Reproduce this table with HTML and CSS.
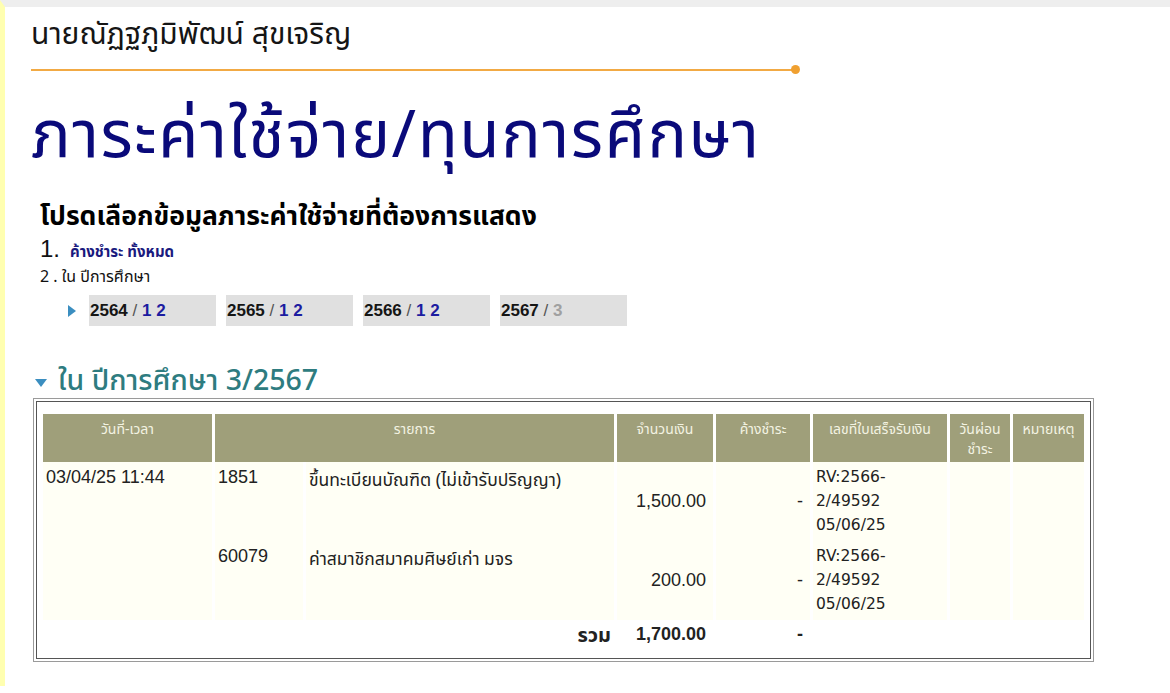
FILE: index.html
```html
<!DOCTYPE html>
<html lang="th">
<head>
<meta charset="utf-8">
<link rel="stylesheet" href="styles.css">
</head>
<body>
<div class="page">
  <div class="content">
    <div class="user-name">นายณัฏฐภูมิพัฒน์ สุขเจริญ</div>
    <div class="rule"><span class="rule-line"></span><span class="rule-dot"></span></div>
    <h1 class="title">ภาระค่าใช้จ่าย/ทุนการศึกษา</h1>
    <div class="chooser">
      <h2 class="chooser-head">โปรดเลือกข้อมูลภาระค่าใช้จ่ายที่ต้องการแสดง</h2>
      <div class="opt1"><span class="num">1.</span> <a class="opt-link">ค้างชำระ ทั้งหมด</a></div>
      <div class="opt2">2 . ใน ปีการศึกษา</div>
      <div class="years">
        <span class="arrow"></span>
        <div class="year-tab"><b>2564</b> <span class="sl">/</span> <span class="sem">1 2</span></div>
        <div class="year-tab"><b>2565</b> <span class="sl">/</span> <span class="sem">1 2</span></div>
        <div class="year-tab"><b>2566</b> <span class="sl">/</span> <span class="sem">1 2</span></div>
        <div class="year-tab"><b>2567</b> <span class="sl">/</span> <span class="sem dim">3</span></div>
      </div>
    </div>
    <h3 class="section-head"><span class="down"></span>ใน ปีการศึกษา 3/2567</h3>
    <div class="box-outer">
      <div class="box-inner">
        <table class="grid">
          <colgroup>
            <col style="width:169px"><col style="width:88px"><col style="width:308px"><col style="width:96px"><col style="width:94px"><col style="width:134px"><col style="width:60px"><col style="width:71px">
          </colgroup>
          <thead>
            <tr>
              <th>วันที่-เวลา</th>
              <th colspan="2">รายการ</th>
              <th>จำนวนเงิน</th>
              <th>ค้างชำระ</th>
              <th>เลขที่ใบเสร็จรับเงิน</th>
              <th>วันผ่อนชำระ</th>
              <th>หมายเหตุ</th>
            </tr>
          </thead>
          <tbody>
            <tr class="item">
              <td class="top">03/04/25 11:44</td>
              <td class="top">1851</td>
              <td class="top thai">ขึ้นทะเบียนบัณฑิต (ไม่เข้ารับปริญญา)</td>
              <td class="amt">1,500.00</td>
              <td class="amt">-</td>
              <td class="rcpt">RV:2566-<br>2/49592<br>05/06/25</td>
              <td></td>
              <td></td>
            </tr>
            <tr class="item">
              <td class="top"></td>
              <td class="top">60079</td>
              <td class="top thai">ค่าสมาชิกสมาคมศิษย์เก่า มจร</td>
              <td class="amt">200.00</td>
              <td class="amt">-</td>
              <td class="rcpt">RV:2566-<br>2/49592<br>05/06/25</td>
              <td></td>
              <td></td>
            </tr>
            <tr class="total">
              <td></td>
              <td></td>
              <td class="sum-label">รวม</td>
              <td class="amt">1,700.00</td>
              <td class="amt">-</td>
              <td></td>
              <td></td>
              <td></td>
            </tr>
          </tbody>
        </table>
      </div>
    </div>
  </div>
</div>
</body>
</html>
```

FILE: styles.css
```css
html, body {
  margin: 0;
  padding: 0;
  background: #ffffff;
}
body {
  font-family: Tahoma, "Noto Sans Thai", "Noto Sans", "DejaVu Sans", sans-serif;
  color: #111;
}
.page {
  border-top: 7px solid #eeeeee;
  border-left: 5px solid #ffffb0;
  min-height: 686px;
  box-sizing: border-box;
}
.content {
  padding-left: 26px;
}
.user-name {
  font-size: 30px;
  line-height: 38px;
  padding-top: 9px;
  color: #151515;
}
.rule {
  display: flex;
  align-items: center;
  width: 769px;
  margin-top: 11px;
}
.rule-line {
  flex: 1;
  height: 2px;
  background: #f2aa44;
}
.rule-dot {
  width: 9px;
  height: 9px;
  border-radius: 50%;
  background: #f0a030;
  margin-left: -2px;
}
.title {
  margin: 23px 0 0 0;
  font-size: 66px;
  line-height: 80px;
  font-weight: normal;
  color: #0a0a7a;
  letter-spacing: 1.5px;
}
.chooser {
  padding-left: 9px;
  margin-top: 21px;
}
.chooser-head {
  margin: 0;
  font-size: 26.5px;
  line-height: 38px;
  font-weight: bold;
  color: #000;
}
.opt1 {
  height: 26px;
  display: flex;
  align-items: baseline;
}
.opt1 .num {
  font-family: "Liberation Sans", Arial, sans-serif;
  font-size: 24px;
  line-height: 26px;
  margin-right: 10px;
}
.opt-link {
  font-size: 15px;
  line-height: 22px;
  font-weight: bold;
  color: #1a1a7e;
}
.opt2 {
  font-size: 16px;
  line-height: 22px;
  margin-top: 4px;
}
.years {
  display: flex;
  align-items: center;
  gap: 10px;
  margin-top: 7px;
  padding-left: 28px;
}
.arrow {
  width: 0;
  height: 0;
  border-top: 6px solid transparent;
  border-bottom: 6px solid transparent;
  border-left: 8px solid #3b8ec0;
  margin-right: 3px;
}
.year-tab {
  width: 127px;
  height: 31px;
  box-sizing: border-box;
  background: #e0e0e0;
  font-family: "Liberation Sans", Arial, sans-serif;
  font-size: 17px;
  line-height: 31px;
  padding-left: 1px;
  white-space: nowrap;
}
.year-tab b {
  color: #151515;
}
.year-tab .sl {
  color: #555;
}
.year-tab .sem {
  color: #1c1ca0;
  font-weight: bold;
}
.year-tab .sem.dim {
  color: #a0a0a0;
}
.section-head {
  margin: 40px 0 0 0;
  display: flex;
  align-items: center;
  font-size: 28.5px;
  line-height: 32px;
  font-weight: 500;
  color: #2e7c80;
}
.down {
  width: 0;
  height: 0;
  border-left: 6px solid transparent;
  border-right: 6px solid transparent;
  border-top: 8px solid #3b8ec0;
  margin: 2px 11px 0 4px;
}
.box-outer {
  width: 1061px;
  box-sizing: border-box;
  border: 1px solid #9a9a9a;
  padding: 2px;
  margin-left: 2px;
  margin-top: 0;
}
.box-inner {
  border: 1px solid #555;
  padding: 12px 4px 5px 4px;
}
.grid {
  border-collapse: separate;
  border-spacing: 3px 0;
  table-layout: fixed;
  width: 1046px;
  margin-left: -1px;
}
.grid th {
  background: #9f9f7a;
  color: #f3f3e2;
  font-weight: normal;
  font-size: 14px;
  height: 42px;
  vertical-align: top;
  padding: 6px 1px 0 1px;
  line-height: 20px;
}
.grid td {
  font-family: "Liberation Sans", Arial, sans-serif;
  font-size: 18px;
  color: #222;
  padding: 4px 3px;
}
.item td {
  background: #fffff5;
  height: 70px;
}
.item td.top {
  vertical-align: top;
  padding-top: 5px;
}
.item td.thai {
  font-family: Tahoma, "Noto Sans Thai", "Noto Sans", sans-serif;
  font-size: 17.5px;
}
.grid td.amt {
  text-align: right;
  vertical-align: middle;
  padding-right: 7px;
}
.grid td.rcpt {
  font-family: "DejaVu Sans", Verdana, sans-serif;
  font-size: 15.5px;
  line-height: 24px;
  vertical-align: top;
  padding-top: 3px;
}
.total td {
  background: #fff;
  font-weight: bold;
  height: 25px;
  vertical-align: top;
}
.total td.sum-label {
  text-align: right;
  font-family: Tahoma, "Noto Sans Thai", "Noto Sans", sans-serif;
  font-size: 20px;
  line-height: 24px;
}
.total td.amt {
  vertical-align: top;
}
```
